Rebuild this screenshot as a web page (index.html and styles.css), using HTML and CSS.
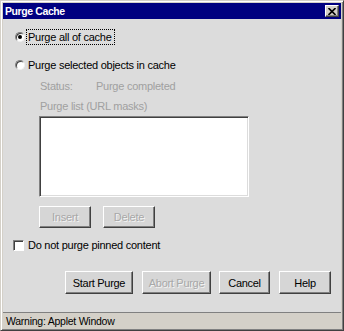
FILE: index.html
```html
<!DOCTYPE html>
<html>
<head>
<meta charset="utf-8">
<link rel="stylesheet" href="styles.css">
</head>
<body>
<div class="window">
  <div class="titlebar">
    <span class="title">Purge Cache</span>
    <span class="close">
      <svg width="8" height="7" viewBox="0 0 8 7"><path d="M0.5 0 L7.5 7 M7.5 0 L0.5 7" stroke="#000" stroke-width="1.6"/></svg>
    </span>
  </div>
  <div class="content">
    <div class="option first">
      <span class="radio"><span class="dot"></span></span>
      <span class="label focus">Purge all of cache</span>
    </div>
    <div class="option second">
      <span class="radio"></span>
      <span class="label">Purge selected objects in cache</span>
    </div>
    <div class="sub">
      <div class="status"><span class="skey">Status:</span><span>Purge completed</span></div>
      <div class="listlabel">Purge list (URL masks)</div>
      <div class="listbox"></div>
      <div class="subbtns">
        <span class="btn small disabled">Insert</span>
        <span class="btn small disabled">Delete</span>
      </div>
    </div>
    <div class="option check">
      <span class="checkbox"></span>
      <span class="label">Do not purge pinned content</span>
    </div>
    <div class="actions">
      <span class="btn start">Start Purge</span>
      <span class="btn abort disabled">Abort Purge</span>
      <span class="btn cancel">Cancel</span>
      <span class="btn help">Help</span>
    </div>
  </div>
  <div class="statusbar">Warning: Applet Window</div>
</div>
</body>
</html>
```

FILE: styles.css
```css
html, body {
  margin: 0;
  padding: 0;
  background: #d4d0c8;
}
.window {
  width: 344px;
  height: 331px;
  box-sizing: border-box;
  border: 1px solid #d4d0c8;
  border-right-color: #404040;
  border-bottom-color: #404040;
  box-shadow: inset 1px 1px 0 #ffffff, inset -1px -1px 0 #808080;
  padding: 2px;
  display: flex;
  flex-direction: column;
  background: #d4d0c8;
  font-family: "Liberation Sans", Arial, sans-serif;
  font-size: 11px;
  letter-spacing: -0.25px;
  color: #000;
}
.titlebar {
  height: 16px;
  background: #000080;
  display: flex;
  align-items: center;
  justify-content: space-between;
  padding: 0 2px 0 2px;
}
.title {
  color: #fff;
  font-weight: bold;
  font-size: 10.5px;
  letter-spacing: -0.4px;
}
.close {
  width: 14px;
  height: 12px;
  background: #d4d0c8;
  box-sizing: border-box;
  border: 1px solid;
  border-color: #ffffff #404040 #404040 #ffffff;
  box-shadow: inset -1px -1px 0 #808080;
  display: flex;
  align-items: center;
  justify-content: center;
}
.close svg { display: block; }
.content {
  flex: 1;
  background: #dcdcdc;
  display: flex;
  flex-direction: column;
  padding: 0 0 0 9px;
}
.option {
  display: flex;
  align-items: center;
  height: 16px;
}
.option.first { margin-top: 10px; }
.option.second { margin-top: 12px; }
.radio {
  width: 10px;
  height: 10px;
  border-radius: 50%;
  background: #fff;
  box-sizing: border-box;
  border: 1px solid #808080;
  border-right-color: #f0f0f0;
  border-bottom-color: #f0f0f0;
  box-shadow: inset 1px 1px 0 #404040;
  margin: 0 3px 0 3px;
  display: flex;
  align-items: center;
  justify-content: center;
}
.dot {
  width: 4px;
  height: 4px;
  border-radius: 50%;
  background: #000;
}
.label { white-space: nowrap; }
.focus {
  outline: 1px dotted #000;
  outline-offset: 0;
  padding: 1px 2px 1px 1px;
  margin-left: -1px;
}
.sub {
  padding-left: 28px;
  color: #a0a0a0;
}
.status {
  margin-top: 6px;
  height: 14px;
  display: flex;
  align-items: center;
}
.skey { width: 56px; }
.listlabel {
  margin-top: 6px;
  height: 14px;
  display: flex;
  align-items: center;
}
.listbox {
  width: 210px;
  height: 81px;
  box-sizing: border-box;
  margin-top: 3px;
  margin-left: -1px;
  background: #fff;
  border: 1px solid;
  border-color: #808080 #ffffff #ffffff #808080;
  box-shadow: inset 1px 1px 0 #404040, inset -1px -1px 0 #dcdcdc;
}
.subbtns {
  display: flex;
  gap: 12px;
  margin-top: 9px;
  margin-left: -1px;
}
.btn {
  height: 22px;
  box-sizing: border-box;
  background: #d6d6d6;
  border: 1px solid;
  border-color: #ffffff #404040 #404040 #ffffff;
  box-shadow: inset -1px -1px 0 #808080;
  display: flex;
  align-items: center;
  justify-content: center;
  color: #000;
  white-space: nowrap;
}
.btn.small { width: 52px; }
.btn.disabled {
  color: #a8a8a8;
  text-shadow: 1px 1px 0 #f4f4f4;
}
.option.check { margin-top: 9px; }
.checkbox {
  width: 11px;
  height: 11px;
  box-sizing: border-box;
  background: #fff;
  border: 1px solid;
  border-color: #808080 #ffffff #ffffff #808080;
  box-shadow: inset 1px 1px 0 #404040;
  margin: 0 4px 0 1px;
}
.actions {
  display: flex;
  justify-content: flex-end;
  margin-top: 18px;
  padding-right: 10px;
}
.actions .btn {
  height: 23px;
  letter-spacing: -0.3px;
}
.actions .start { width: 68px; }
.actions .abort { width: 69px; margin-left: 9px; }
.actions .cancel { width: 51px; margin-left: 8px; }
.actions .help { width: 52px; margin-left: 9px; }
.statusbar {
  height: 16px;
  margin-top: auto;
  box-sizing: border-box;
  border-top: 1px solid #808080;
  background: #d4d0c8;
  padding-left: 3px;
  display: flex;
  align-items: center;
  font-size: 10.5px;
  color: #000;
}
```
